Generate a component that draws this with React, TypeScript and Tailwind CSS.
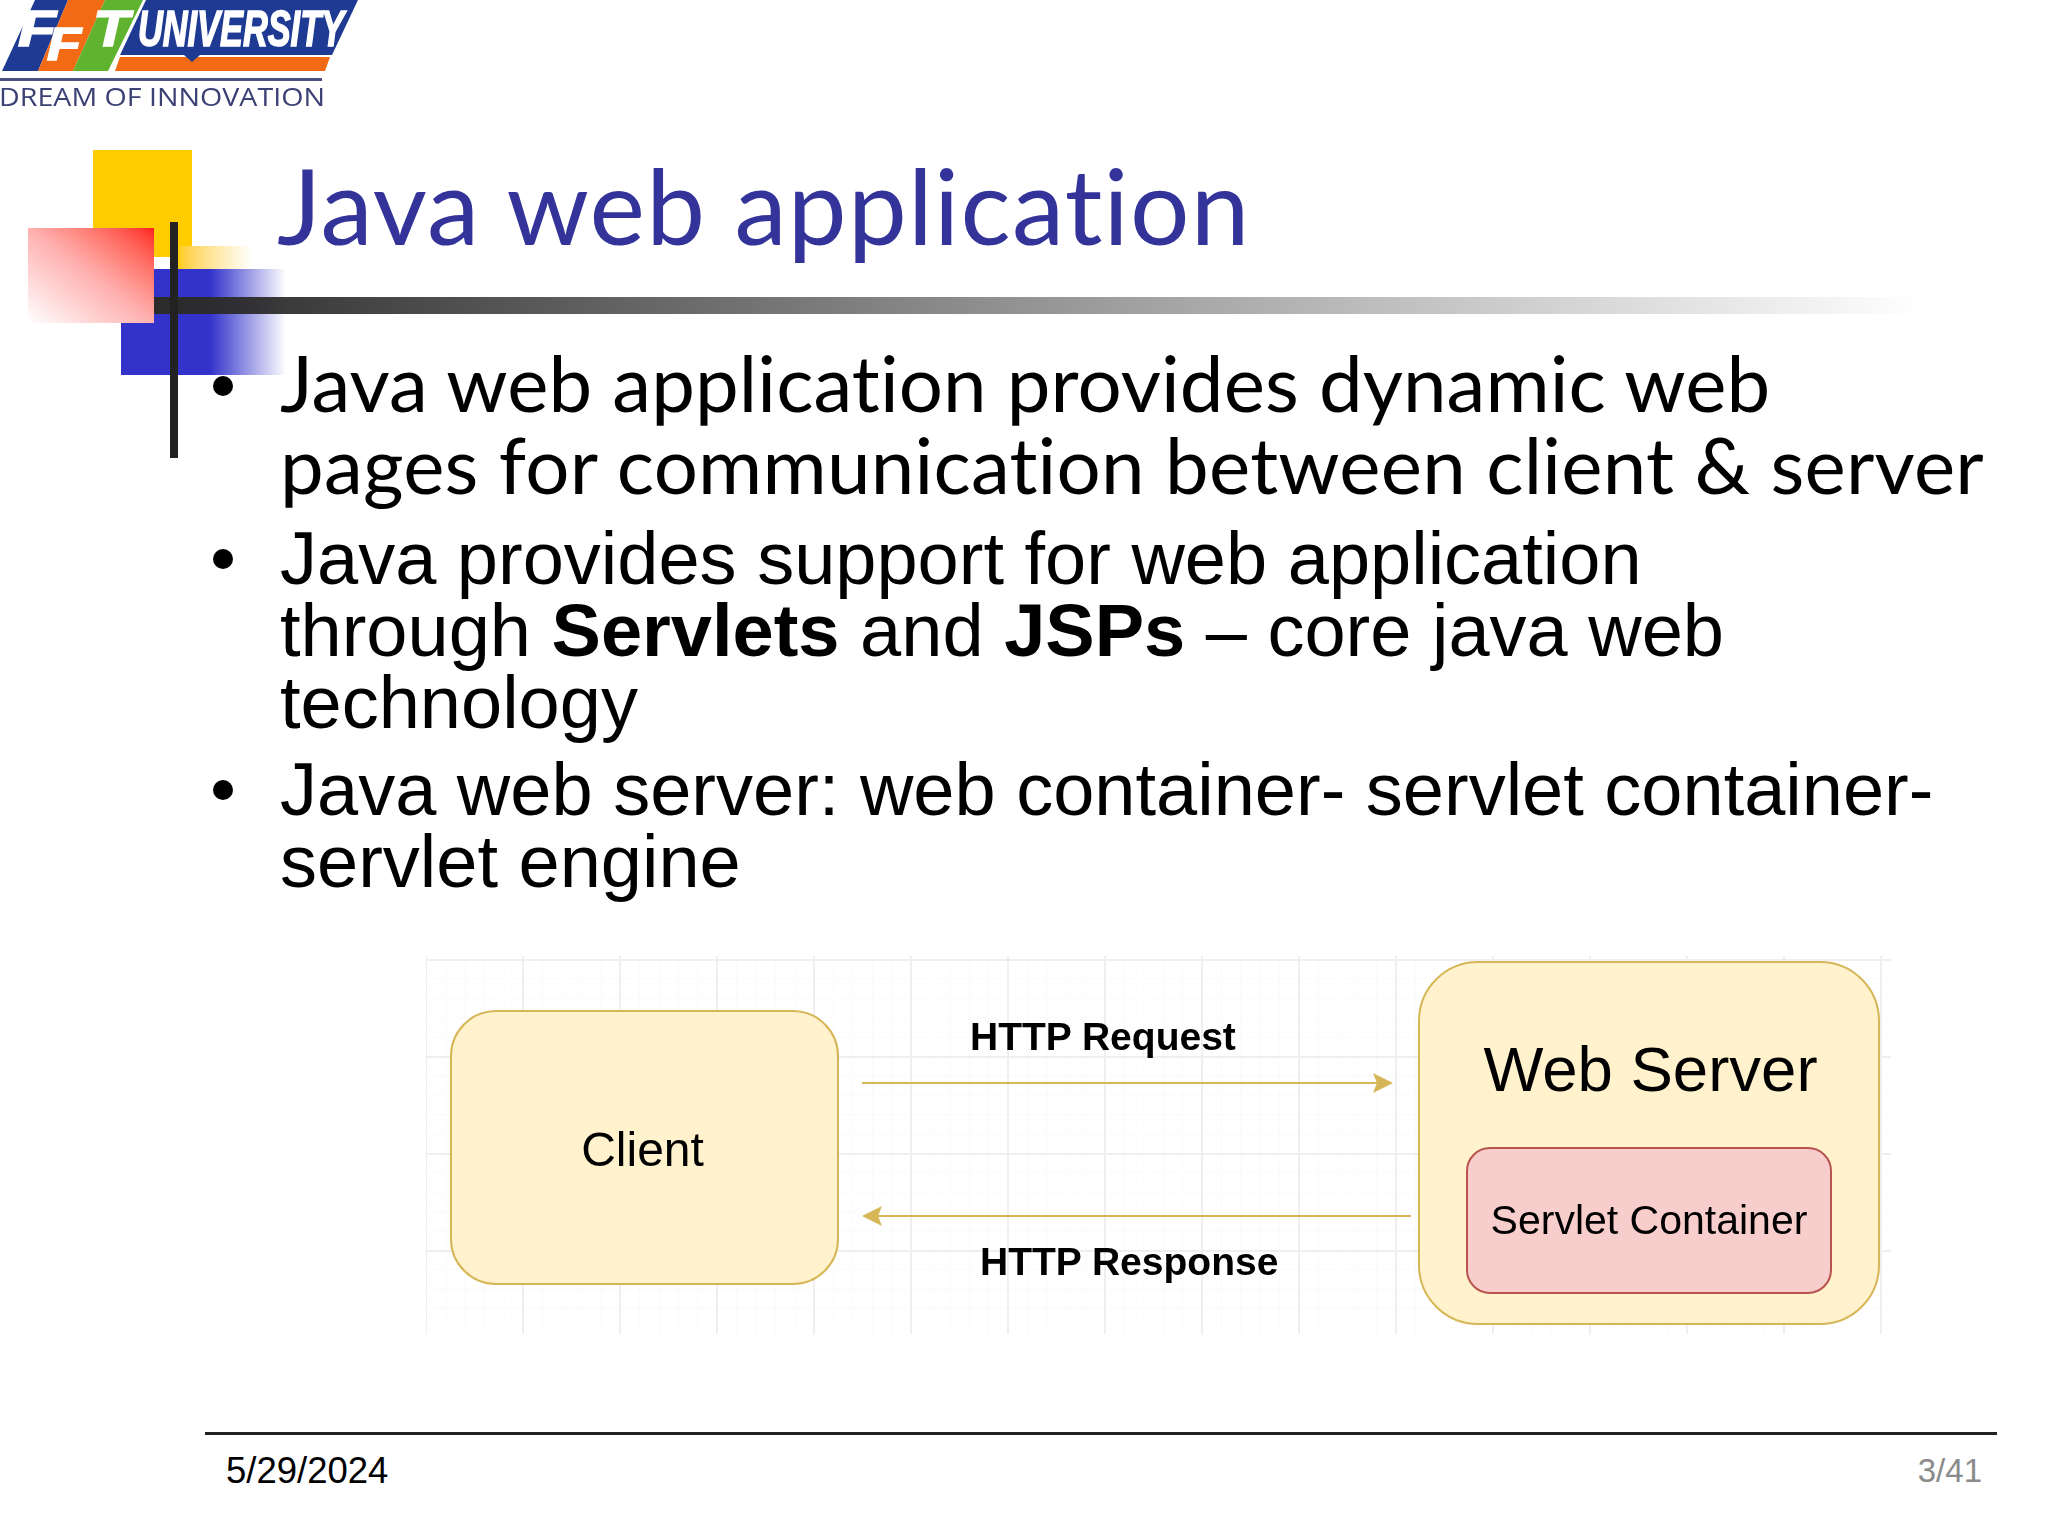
import React from 'react';

const sans = "font-['Liberation_Sans',Arial,sans-serif]";

const Logo: React.FC = () => (
  <svg width="360" height="112" viewBox="0 0 360 112" className="block blur-[0.5px]">
    <polygon points="35,0 68,0 38,71 2,71" fill="#1f3a93" />
    <polygon points="68,0 105,0 73,71 38,71" fill="#f26a13" />
    <polygon points="105,0 143,0 108,71 73,71" fill="#5fb32e" />
    <polygon points="146,0 358,0 332,55 120,55" fill="#1f3a93" />
    <polygon points="120,57 330,57 325,71 115,71" fill="#f26a13" />
    <polygon points="184,55 200,55 192,62" fill="#1f3a93" />
    <g fill="#fff" stroke="#fff" strokeWidth="1.6" fontFamily="'Liberation Sans', Arial, sans-serif" fontWeight="700" fontStyle="italic">
      <text x="18" y="46" fontSize="50" textLength="38" lengthAdjust="spacingAndGlyphs">F</text>
      <text x="47" y="60" fontSize="46" textLength="34" lengthAdjust="spacingAndGlyphs">F</text>
      <text x="93" y="46" fontSize="50" textLength="36" lengthAdjust="spacingAndGlyphs">T</text>
      <text x="138" y="46" fontSize="50" textLength="206" lengthAdjust="spacingAndGlyphs">UNIVERSITY</text>
    </g>
    <rect x="0" y="78" width="322" height="3" fill="#4a4f80" />
    <text x="-1" y="106" fontSize="25" fill="#3b4075" fontFamily="'Open Sans', sans-serif" textLength="326" lengthAdjust="spacingAndGlyphs">DREAM OF INNOVATION</text>
  </svg>
);

// title ornament, lies behind/over the title and first bullet
const Ornament: React.FC = () => (
  <>
    <div className="absolute left-[93px] top-[150px] h-[107px] w-[99px] bg-[#ffcc00]" />
    <div className="absolute left-[178px] top-[246px] h-[23px] w-[75px] bg-linear-to-r from-[#ffcc00] to-white" />
    <div className="absolute left-[121px] top-[269px] h-[106px] w-[165px] bg-[linear-gradient(to_right,#3333cc_0%,#3333cc_54%,transparent_100%)]" />
    <div className="absolute left-[28px] top-[228px] h-[95px] w-[126px] bg-linear-to-bl from-[#ff1a1a] via-[#ffb0b0] to-white" />
    <div className="absolute left-[154px] top-[297px] h-[17px] w-[1770px] bg-linear-to-r from-[#2b2b2b] to-transparent" />
    <div className="absolute left-[170px] top-[222px] h-[236px] w-[8px] bg-[#222222]" />
  </>
);

const Diagram: React.FC = () => (
  <div className={`ml-[426px] flex h-[378px] w-[1465px] items-start pl-[24px] text-black blur-[0.5px] ${sans} bg-[linear-gradient(#efefef_2px,transparent_2px),linear-gradient(90deg,#efefef_2px,transparent_2px),linear-gradient(#fafafa_1px,transparent_1px),linear-gradient(90deg,#fafafa_1px,transparent_1px)] bg-[size:97px_97px,97px_97px,19.4px_19.4px,19.4px_19.4px] bg-[position:96px_3px,96px_3px,0_3px,0_3px]`}>
    <div className="mt-[54px] flex h-[275px] w-[389px] shrink-0 items-center justify-center rounded-[46px] border-2 border-[#d6b656] bg-[#fff2cc] pt-[4px] pr-[4px] text-[48px]">
      Client
    </div>

    <div className="ml-[23px] mt-[59px] flex w-[550px] shrink-0 flex-col">
      <div className="pl-[108px] text-[39px] leading-[44px] font-bold whitespace-nowrap">HTTP Request</div>
      <div className="mt-[14px] flex h-[20px] w-[531px] items-center">
        <div className="h-[2px] flex-1 bg-[#d6b656]" />
        <svg className="-ml-[4px]" width="20" height="20" viewBox="0 0 20 20">
          <polygon points="0,0 20,10 0,20 4,10" fill="#d6b656" />
        </svg>
      </div>
      <div className="mt-[113px] flex h-[20px] w-[549px] items-center">
        <svg className="-mr-[4px]" width="20" height="20" viewBox="0 0 20 20">
          <polygon points="20,0 0,10 20,20 16,10" fill="#d6b656" />
        </svg>
        <div className="h-[2px] flex-1 bg-[#d6b656]" />
      </div>
      <div className="mt-[14px] pl-[118px] text-[39px] leading-[44px] font-bold whitespace-nowrap">HTTP Response</div>
    </div>

    <div className="ml-[6px] mt-[5px] flex h-[364px] w-[462px] shrink-0 flex-col items-center rounded-[60px] border-2 border-[#d6b656] bg-[#fff2cc] pt-[70px]">
      <div className="pl-[3px] text-[63.5px] leading-[72px]">Web Server</div>
      <div className="mt-[42px] flex h-[147px] w-[366px] items-center justify-center rounded-[24px] border-2 border-[#b85450] bg-[#f8cecc] text-[41px]">
        Servlet Container
      </div>
    </div>
  </div>
);

export default function App() {
  return (
    <div className={`relative h-[1536px] w-[2048px] overflow-hidden bg-white ${sans}`}>
      <Logo />
      <Ornament />

      <h1 className="relative ml-[277px] mt-[34px] text-[105px] leading-[116px] font-normal tracking-[1.25px] whitespace-nowrap text-[#333399] font-['Lato',sans-serif] [font-variant-ligatures:none]">
        Java web application
      </h1>

      <ul className="relative ml-[213px] mt-[79px] text-black">
        <li className="flex gap-[47px] font-['Lato',sans-serif] text-[78px] leading-[82px] tracking-[0.25px] whitespace-nowrap [font-variant-ligatures:none]">
          <span className="mt-[35px] h-[20px] w-[20px] shrink-0 rounded-full bg-black" />
          <span>
            <span className="tracking-[0.1px]">Java web application provides dynamic web</span>
            <br />
            pages for communication between client &amp; server
          </span>
        </li>
        <li className="mt-[18px] flex gap-[47px] text-[74px] leading-[72px] whitespace-nowrap">
          <span className="mt-[26px] h-[20px] w-[20px] shrink-0 rounded-full bg-black" />
          <span>
            Java provides support for web application
            <br />
            through <b>Servlets</b> and <b>JSPs</b> – core java web
            <br />
            technology
          </span>
        </li>
        <li className="mt-[15px] flex gap-[47px] text-[74px] leading-[72px] whitespace-nowrap">
          <span className="mt-[26px] h-[20px] w-[20px] shrink-0 rounded-full bg-black" />
          <span>
            Java web server: web container- servlet container-
            <br />
            servlet engine
          </span>
        </li>
      </ul>

      <div className="mt-[58px]">
        <Diagram />
      </div>

      <footer className="relative ml-[205px] mt-[98px] w-[1792px] border-t-[3px] border-[#222222]">
        <div className="flex items-center justify-between pl-[21px] pr-[15px] pt-[15px]">
          <span className="text-[36.5px] leading-[42px] text-black">5/29/2024</span>
          <span className="text-[33px] leading-[42px] text-[#8b8b8b]">3/41</span>
        </div>
      </footer>
    </div>
  );
}
